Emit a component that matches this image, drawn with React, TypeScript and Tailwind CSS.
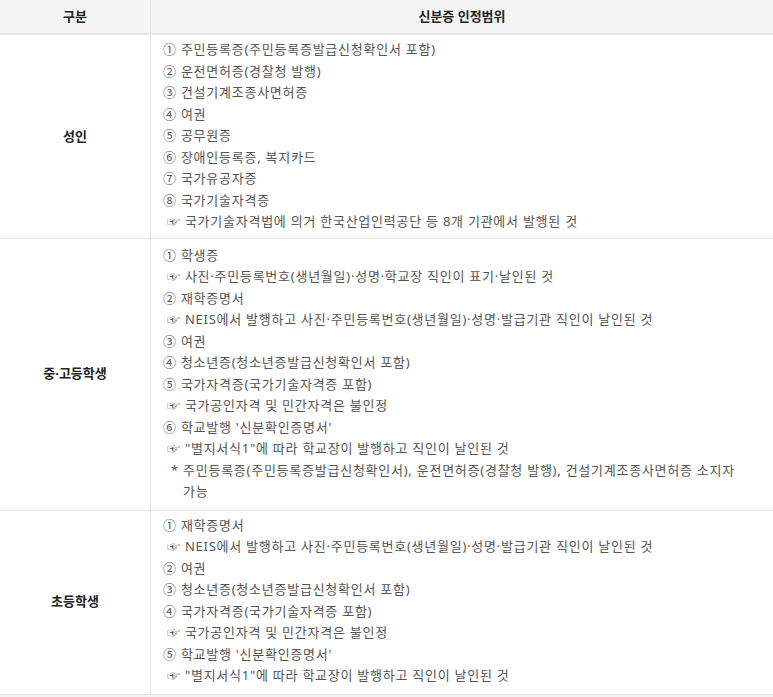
import React from "react";

type Line = { t: string; kind?: "num" | "hand" | "star" };

const rows: { label: string; pad: string; lines: Line[] }[] = [
  {
    label: "성인",
    pad: "pt-[4px] pb-[5px]",
    lines: [
      { t: "① 주민등록증(주민등록증발급신청확인서 포함)" },
      { t: "② 운전면허증(경찰청 발행)" },
      { t: "③ 건설기계조종사면허증" },
      { t: "④ 여권" },
      { t: "⑤ 공무원증" },
      { t: "⑥ 장애인등록증, 복지카드" },
      { t: "⑦ 국가유공자증" },
      { t: "⑧ 국가기술자격증" },
      { t: "☞ 국가기술자격법에 의거 한국산업인력공단 등 8개 기관에서 발행된 것", kind: "hand" },
    ],
  },
  {
    label: "중·고등학생",
    pad: "pt-[6px] pb-[7px]",
    lines: [
      { t: "① 학생증" },
      { t: "☞ 사진·주민등록번호(생년월일)·성명·학교장 직인이 표기·날인된 것", kind: "hand" },
      { t: "② 재학증명서" },
      { t: "☞ NEIS에서 발행하고 사진·주민등록번호(생년월일)·성명·발급기관 직인이 날인된 것", kind: "hand" },
      { t: "③ 여권" },
      { t: "④ 청소년증(청소년증발급신청확인서 포함)" },
      { t: "⑤ 국가자격증(국가기술자격증 포함)" },
      { t: "☞ 국가공인자격 및 민간자격은 불인정", kind: "hand" },
      { t: "⑥ 학교발행 '신분확인증명서'" },
      { t: "☞ \"별지서식1\"에 따라 학교장이 발행하고 직인이 날인된 것", kind: "hand" },
      { t: "주민등록증(주민등록증발급신청확인서), 운전면허증(경찰청 발행), 건설기계조종사면허증 소지자 가능", kind: "star" },
    ],
  },
  {
    label: "초등학생",
    pad: "pt-[4px] pb-[7px]",
    lines: [
      { t: "① 재학증명서" },
      { t: "☞ NEIS에서 발행하고 사진·주민등록번호(생년월일)·성명·발급기관 직인이 날인된 것", kind: "hand" },
      { t: "② 여권" },
      { t: "③ 청소년증(청소년증발급신청확인서 포함)" },
      { t: "④ 국가자격증(국가기술자격증 포함)" },
      { t: "☞ 국가공인자격 및 민간자격은 불인정", kind: "hand" },
      { t: "⑤ 학교발행 '신분확인증명서'" },
      { t: "☞ \"별지서식1\"에 따라 학교장이 발행하고 직인이 날인된 것", kind: "hand" },
    ],
  },
];

function Text({ line }: { line: Line }) {
  if (line.kind === "hand") {
    return <div className="pl-[4px]">{line.t}</div>;
  }
  if (line.kind === "star") {
    return (
      <div className="flex pl-[8px]">
        <span className="w-[12px] shrink-0">*</span>
        <span className="pr-[20px] break-keep">{line.t}</span>
      </div>
    );
  }
  return <div>{line.t}</div>;
}

export default function App() {
  return (
    <div
      className="w-[773px] h-[697px] overflow-hidden bg-white text-[13px]"
      style={{ fontFamily: '"Noto Sans", "Noto Sans CJK KR", sans-serif' }}
    >
      <div className="grid grid-cols-[151px_1fr] bg-[#f5f5f5] border-b-2 border-[#e6e6e6] h-[35px]">
        <div className="flex items-center justify-center font-bold text-[#222] border-r border-[#e6e6e6]">구분</div>
        <div className="flex items-center justify-center font-bold text-[#222]">신분증 인정범위</div>
      </div>
      {rows.map((r) => (
        <div key={r.label} className="grid grid-cols-[151px_1fr] border-b border-[#e4e4e4]">
          <div className="flex items-center justify-center font-bold text-[#222] border-r border-[#e6e6e6]">
            {r.label}
          </div>
          <div className={`pl-[12px] ${r.pad} leading-[21.5px] text-[#555] tracking-[0.75px]`}>
            {r.lines.map((l, i) => (
              <Text key={i} line={l} />
            ))}
          </div>
        </div>
      ))}
      <div className="h-[20px] bg-[#f5f5f5]" />
    </div>
  );
}
